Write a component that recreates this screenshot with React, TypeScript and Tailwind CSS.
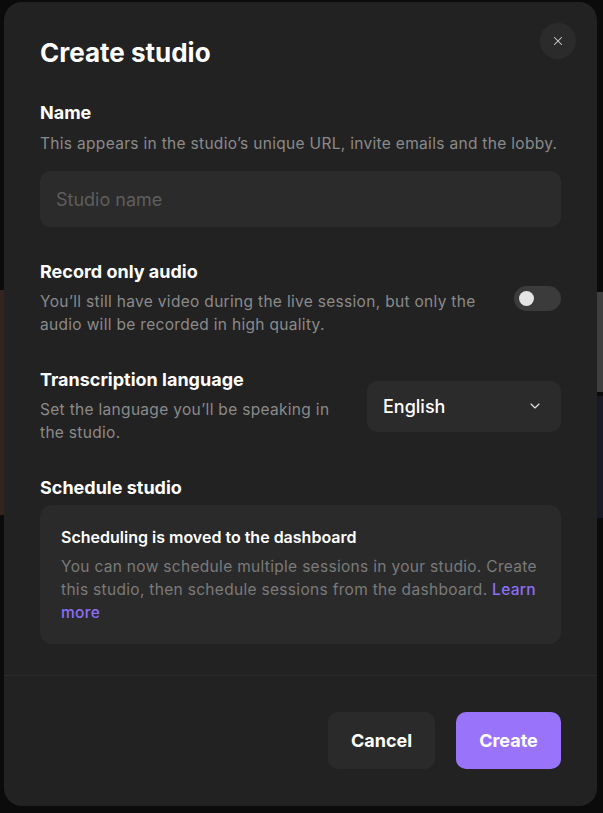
import { X, ChevronDown } from "lucide-react";

export default function App() {
  return (
    <div className="relative h-[813px] w-full overflow-hidden bg-[#0b0b0b] font-['Inter',sans-serif]">
      {/* dimmed page behind the dialog */}
      <div className="absolute left-0 top-[290px] h-[225px] w-[12px] bg-[#33241f]" />
      <div className="absolute right-0 top-[292px] h-[100px] w-[12px] bg-[#3f3f3f]" />
      <div className="absolute right-0 top-[396px] h-[122px] w-[12px] bg-[#1a1a26]" />

      <div className="relative ml-[4px] mt-[2px] flex h-[804px] w-[593px] flex-col rounded-[18px] bg-[#222222]">
        <button className="absolute right-[21px] top-[21px] flex h-9 w-9 items-center justify-center rounded-full bg-[#2b2b2b] text-[#d4d4d4]">
          <X size={14} strokeWidth={1.75} />
        </button>

        <div className="flex flex-col gap-8 px-9 pt-[35px]">
          <h1 className="text-[26px] leading-8 font-bold text-white">Create studio</h1>

          <section className="flex flex-col">
            <h2 className="text-[18px] leading-6 font-bold text-white">Name</h2>
            <p className="mt-2 text-[15.5px] leading-[22px] tracking-[0.02em] text-[#8a8a8a]">
              This appears in the studio&rsquo;s unique URL, invite emails and the lobby.
            </p>
            <div className="mt-4 flex h-14 items-center rounded-[10px] bg-[#2b2b2b] px-4">
              <span className="text-[18px] text-[#5e5e5e]">Studio name</span>
            </div>
          </section>

          <section className="flex items-center gap-6 pt-[1px]">
            <div className="flex-1">
              <h2 className="text-[18px] leading-6 font-bold text-white">Record only audio</h2>
              <p className="mt-1.5 text-[15.5px] leading-[23px] tracking-[0.02em] text-[#8a8a8a]">
                You&rsquo;ll still have video during the live session, but only the audio will be recorded in high quality.
              </p>
            </div>
            <div className="flex h-[25px] w-[47px] shrink-0 items-center rounded-full bg-[#3b3b3b] px-[5px]">
              <div className="h-[15px] w-[15px] rounded-full bg-[#e4e4e4]" />
            </div>
          </section>

          <section className="flex items-center gap-6">
            <div className="flex-1">
              <h2 className="text-[18px] leading-6 font-bold text-white">Transcription language</h2>
              <p className="mt-1.5 text-[15.5px] leading-[23px] tracking-[0.02em] text-[#8a8a8a]">
                Set the language you&rsquo;ll be speaking in the studio.
              </p>
            </div>
            <div className="flex h-[51px] w-[194px] shrink-0 items-center justify-between rounded-[10px] bg-[#2b2b2b] pl-4 pr-[18px]">
              <span className="text-[18px] font-medium text-white">English</span>
              <ChevronDown size={16} strokeWidth={1.75} className="text-[#e0e0e0]" />
            </div>
          </section>

          <section className="flex flex-col">
            <h2 className="text-[18px] leading-6 font-bold text-white">Schedule studio</h2>
            <div className="mt-[5px] rounded-[12px] bg-[#2a2a2a] px-[21px] pb-5 pt-5">
              <h3 className="text-[16px] leading-6 font-semibold text-white">Scheduling is moved to the dashboard</h3>
              <p className="mt-1.5 text-[15.5px] leading-[23px] tracking-[0.02em] text-[#7a7a7a]">
                You can now schedule multiple sessions in your studio. Create this studio, then schedule sessions from the dashboard.{" "}
                <a className="font-medium text-[#8d6ff6]">Learn more</a>
              </p>
            </div>
          </section>
        </div>

        <div className="mt-[31px] border-t border-[#2c2c2c]" />

        <div className="flex justify-end gap-[21px] px-9 pt-[36px]">
          <button className="h-[57px] w-[107px] rounded-[10px] bg-[#2a2a2a] text-[18px] font-bold text-white">Cancel</button>
          <button className="h-[57px] w-[105px] rounded-[10px] bg-[#9a73fb] text-[18px] font-bold text-white">Create</button>
        </div>
      </div>
    </div>
  );
}
